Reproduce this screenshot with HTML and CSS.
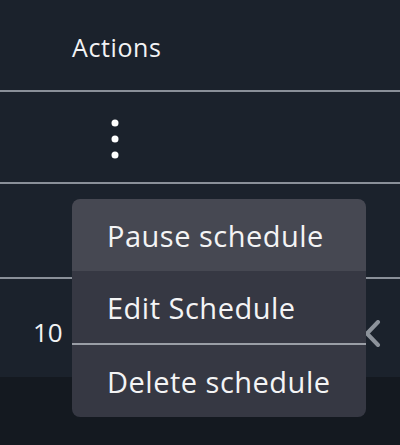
FILE: index.html
```html
<!DOCTYPE html>
<html>
<head>
<meta charset="utf-8">
<link rel="stylesheet" href="styles.css">
</head>
<body>
<div class="page">
  <div class="table">
    <div class="row head"><span class="th">Actions</span></div>
    <div class="row body">
      <svg class="kebab" width="10" height="42" viewBox="0 0 10 42">
        <circle cx="5" cy="5" r="3.5"/>
        <circle cx="5" cy="21" r="3.5"/>
        <circle cx="5" cy="37" r="3.5"/>
      </svg>
    </div>
    <div class="row body"></div>
    <div class="footer">
      <span class="count">10</span>
      <svg class="chev" width="18" height="28" viewBox="0 0 18 28">
        <path d="M14 2 L3 13.5 L14 25" fill="none" stroke="currentColor" stroke-width="4" stroke-linecap="round" stroke-linejoin="round"/>
      </svg>
    </div>
  </div>
  <div class="bottom"></div>
  <div class="menu">
    <div class="item active">Pause schedule</div>
    <div class="item">Edit Schedule</div>
    <div class="sep"></div>
    <div class="item">Delete schedule</div>
  </div>
</div>
</body>
</html>
```
FILE: styles.css
```css
html, body {
  margin: 0;
  padding: 0;
}
body {
  background: #141920;
  font-family: "Open Sans", "Noto Sans", sans-serif;
  color: #f2f3f4;
  width: 400px;
  height: 445px;
  overflow: hidden;
}
.page {
  position: relative;
  width: 400px;
  height: 445px;
}
.table {
  background: #1b222c;
  display: flex;
  flex-direction: column;
}
.row {
  border-bottom: 2px solid #8a9099;
  display: flex;
  align-items: center;
}
.head {
  height: 90px;
  padding-left: 72px;
}
.th {
  font-size: 25px;
  letter-spacing: 0.6px;
  line-height: 1;
  padding-top: 4px;
}
.body {
  height: 90px;
}
.body + .body {
  height: 93px;
}
.kebab {
  fill: #ffffff;
  margin-left: 110px;
  margin-top: 4px;
}
.footer {
  height: 98px;
  display: flex;
  align-items: center;
  justify-content: space-between;
  padding-left: 33px;
  padding-right: 18px;
}
.count {
  font-size: 26px;
  line-height: 1;
  padding-top: 8px;
}
.chev {
  color: #8d939b;
  margin-top: 12px;
}
.menu {
  position: absolute;
  left: 72px;
  top: 199px;
  width: 294px;
  background: #363843;
  border-radius: 8px;
  display: flex;
  flex-direction: column;
  overflow: hidden;
}
.item {
  height: 72px;
  display: flex;
  align-items: center;
  padding-left: 35px;
  font-size: 29px;
  letter-spacing: 0.5px;
  color: #f4f4f5;
}
.item.active {
  background: #464852;
  border-radius: 8px 8px 0 0;
}
.sep {
  height: 2px;
  background: #9a9ea6;
}
```
